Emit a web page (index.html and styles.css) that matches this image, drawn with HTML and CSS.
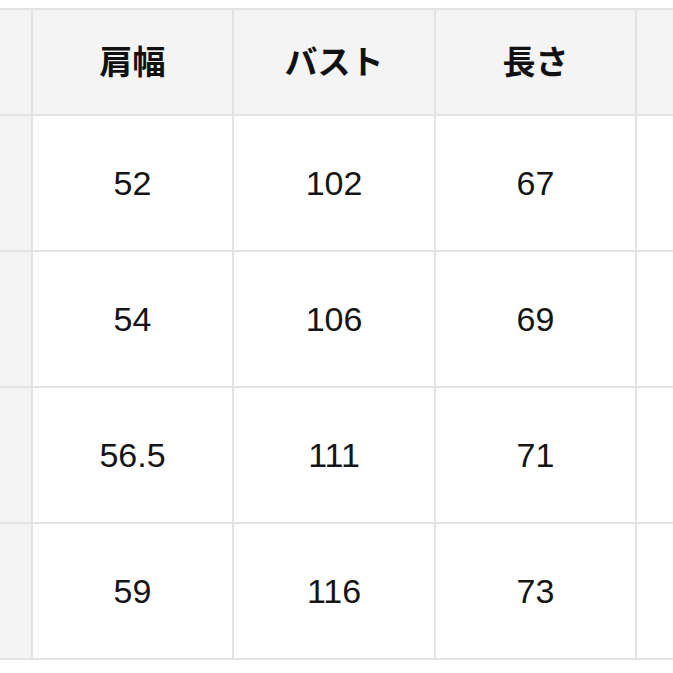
FILE: index.html
```html
<!DOCTYPE html>
<html lang="ja">
<head>
<meta charset="utf-8">
<link rel="stylesheet" href="styles.css">
</head>
<body>
<div class="sheet">
  <div class="grid">
    <div class="cell head side"></div>
    <div class="cell head">肩幅</div>
    <div class="cell head">バスト</div>
    <div class="cell head">長さ</div>
    <div class="cell head"></div>

    <div class="cell side"></div>
    <div class="cell">52</div>
    <div class="cell">102</div>
    <div class="cell">67</div>
    <div class="cell"></div>

    <div class="cell side"></div>
    <div class="cell">54</div>
    <div class="cell">106</div>
    <div class="cell">69</div>
    <div class="cell"></div>

    <div class="cell side"></div>
    <div class="cell">56.5</div>
    <div class="cell">111</div>
    <div class="cell">71</div>
    <div class="cell"></div>

    <div class="cell side"></div>
    <div class="cell">59</div>
    <div class="cell">116</div>
    <div class="cell">73</div>
    <div class="cell"></div>
  </div>
</div>
</body>
</html>
```
FILE: styles.css
```css
html, body {
  margin: 0;
  padding: 0;
  background: #ffffff;
}
.sheet {
  width: 673px;
  height: 673px;
  overflow: hidden;
  padding-top: 8px;
  box-sizing: border-box;
}
.grid {
  display: grid;
  grid-template-columns: 31px 199px 200px 199px 1fr;
  grid-template-rows: 104px 134px 134px 134px 134px;
  gap: 2px;
  padding: 2px 0;
  background: #e3e3e3;
}
.cell {
  background: #ffffff;
  display: flex;
  align-items: center;
  justify-content: center;
  font-family: "Liberation Sans", Arial, sans-serif;
  font-size: 34px;
  color: #151515;
  padding-top: 1px;
}
.head {
  background: #f4f4f4;
  font-family: "Noto Sans CJK JP", sans-serif;
  font-weight: 700;
  font-size: 33px;
  color: #111111;
  padding-top: 0;
  padding-bottom: 4px;
}
.side {
  background: #f4f4f4;
}
```
